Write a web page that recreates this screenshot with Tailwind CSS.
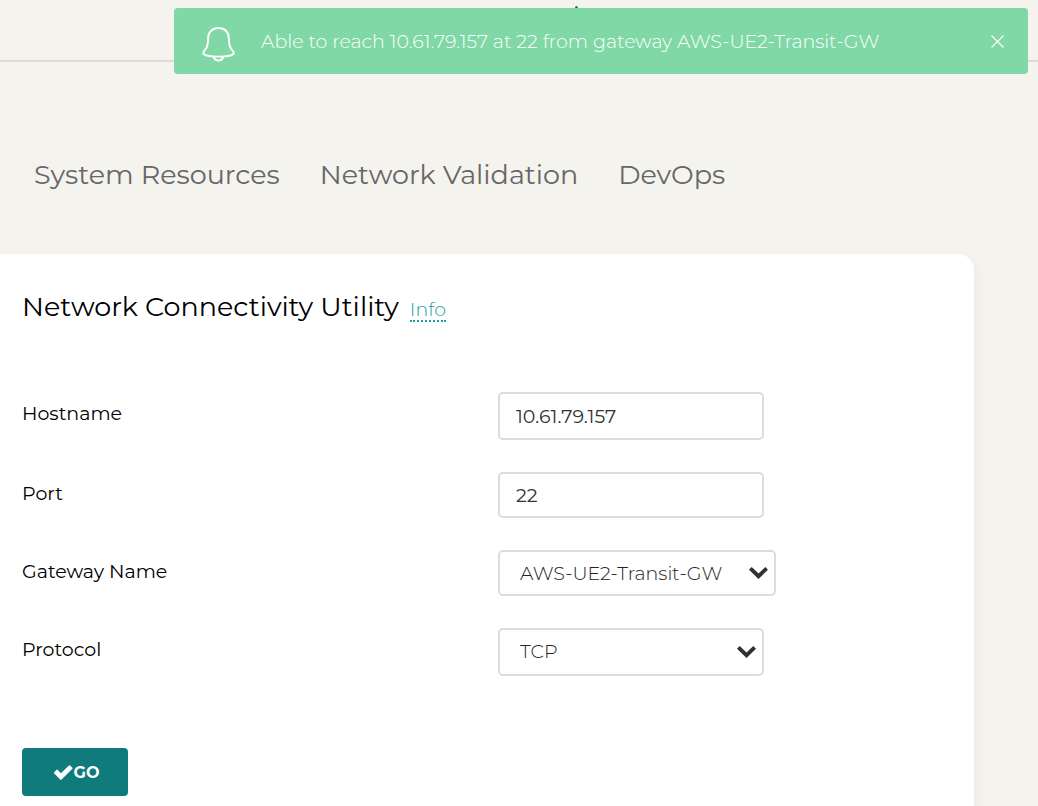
<!DOCTYPE html>
<html lang="en">
<head>
<meta charset="utf-8">
<meta name="viewport" content="width=device-width, initial-scale=1">
<title>Network Connectivity Utility</title>
<script src="https://cdn.jsdelivr.net/npm/@tailwindcss/browser@4"></script>
</head>
<body class="flex min-h-screen flex-col overflow-x-hidden bg-[#f4f3ee] font-['Montserrat','Inter',sans-serif] text-[19px] text-black">
  <header class="relative h-[62px] border-b-2 border-[#dcdcdc]">
    <span class="absolute top-[6px] left-[575px] size-[3px] rounded-full bg-[#0f7b7d]"></span>
  </header>

  <div role="status" class="absolute top-2 right-[10px] left-[174px] flex h-[66px] items-center rounded bg-[#80d8a6] pr-[23px] pl-7 font-light text-white">
    <svg class="mt-[6px] h-9 w-[33px] shrink-0" viewBox="0 0 34 36" fill="none" stroke="currentColor" stroke-width="2" stroke-linejoin="round" aria-hidden="true">
      <path d="M17 1.500C10.500 1.500 6.300 6 6.300 12C6.300 19 5.500 21.500 3.300 23.800C1.900 25.200 1.300 26 1.300 27.200C1.300 29.500 8 31 17 31S32.700 29.500 32.700 27.200C32.700 26 32.100 25.200 30.700 23.800C28.500 21.500 27.700 19 27.700 12C27.700 6 23.500 1.500 17 1.500Z"/>
      <path d="M12 31C12.800 33.800 14.500 35 17 35S21.200 33.800 22 31"/>
    </svg>
    <p class="ml-[26px] flex-1 pt-[2px] whitespace-nowrap">Able to reach 10.61.79.157 at 22 from gateway AWS-UE2-Transit-GW</p>
    <button type="button" aria-label="Close" class="flex size-4 items-center justify-center">
      <svg class="size-[13px]" viewBox="0 0 13 13" stroke="currentColor" stroke-width="1.1" aria-hidden="true"><path d="M.5.5l12 12M12.500.5l-12 12"/></svg>
    </button>
  </div>

  <nav class="mt-[95px] flex gap-10 pl-[34px] text-[27px] leading-9 whitespace-nowrap text-[#666]">
    <a href="#">System Resources</a>
    <a href="#">Network Validation</a>
    <a href="#">DevOps</a>
  </nav>

  <main class="mt-[61px] mr-16 flex-1 rounded-tr-2xl bg-white pt-[35px] pb-[10px] pl-[22px] shadow-[0_8px_16px_rgba(0,0,0,0.06)]">
    <div class="flex items-baseline gap-[11px]">
      <h1 class="text-[27px] leading-9">Network Connectivity Utility</h1>
      <a href="#" class="border-b-2 border-dotted border-[#17a2a2] leading-5 font-light text-[#17a2a2]">Info</a>
    </div>

    <form class="mt-[67px]">
      <div class="flex flex-col gap-8">
        <div class="grid grid-cols-2">
          <label for="host" class="leading-11">Hostname</label>
          <input id="host" type="text" value="10.61.79.157" class="h-12 w-[266px] rounded-[5px] border-2 border-[#dcdcdc] px-4 text-[#35312c]">
        </div>
        <div class="grid grid-cols-2">
          <label for="port" class="leading-11">Port</label>
          <input id="port" type="text" value="22" class="h-[46px] w-[266px] rounded-[5px] border-2 border-[#dcdcdc] px-4 text-[#35312c]">
        </div>
        <div class="grid grid-cols-2">
          <label for="gateway" class="leading-11">Gateway Name</label>
          <div class="relative w-[278px]">
            <select id="gateway" class="h-[46px] w-full appearance-none rounded-[5px] border-2 border-[#dcdcdc] bg-white pt-[2px] pl-5 font-light text-[#25211c]"><option>AWS-UE2-Transit-GW</option></select>
            <svg class="pointer-events-none absolute top-[17px] right-2 h-3 w-[19px]" viewBox="0 0 19 12" fill="#35302b" aria-hidden="true"><path d="M2.700 0L9.500 6.500L16.300 0L19 2.800L9.500 12L0 2.800Z"/></svg>
          </div>
        </div>
        <div class="grid grid-cols-2">
          <label for="protocol" class="leading-11">Protocol</label>
          <div class="relative w-[266px]">
            <select id="protocol" class="h-12 w-full appearance-none rounded-[5px] border-2 border-[#dcdcdc] bg-white pl-5 font-light text-[#25211c]"><option>TCP</option></select>
            <svg class="pointer-events-none absolute top-[18px] right-2 h-3 w-[19px]" viewBox="0 0 19 12" fill="#35302b" aria-hidden="true"><path d="M2.700 0L9.500 6.500L16.300 0L19 2.800L9.500 12L0 2.800Z"/></svg>
          </div>
        </div>
      </div>
      <button type="button" class="mt-18 flex h-12 w-[106px] items-center justify-center gap-px rounded bg-[#0f7b7d] pt-px pl-[3px] text-base font-bold text-white">
        <svg class="h-[15px] w-[19px]" viewBox="0 0 19 15" fill="currentColor" aria-hidden="true"><path d="M0 7.600L2.600 4.700Q3.100 4.300 3.600 4.800L6.900 8.200L14.900.4Q15.500-.1 16 .4L18.400 2.800Q18.900 3.300 18.400 3.800L7.600 14.400Q6.900 15 6.200 14.400L.2 8.500Q-.2 8 0 7.600Z"/></svg>
        GO
      </button>
    </form>
  </main>
</body>
</html>
